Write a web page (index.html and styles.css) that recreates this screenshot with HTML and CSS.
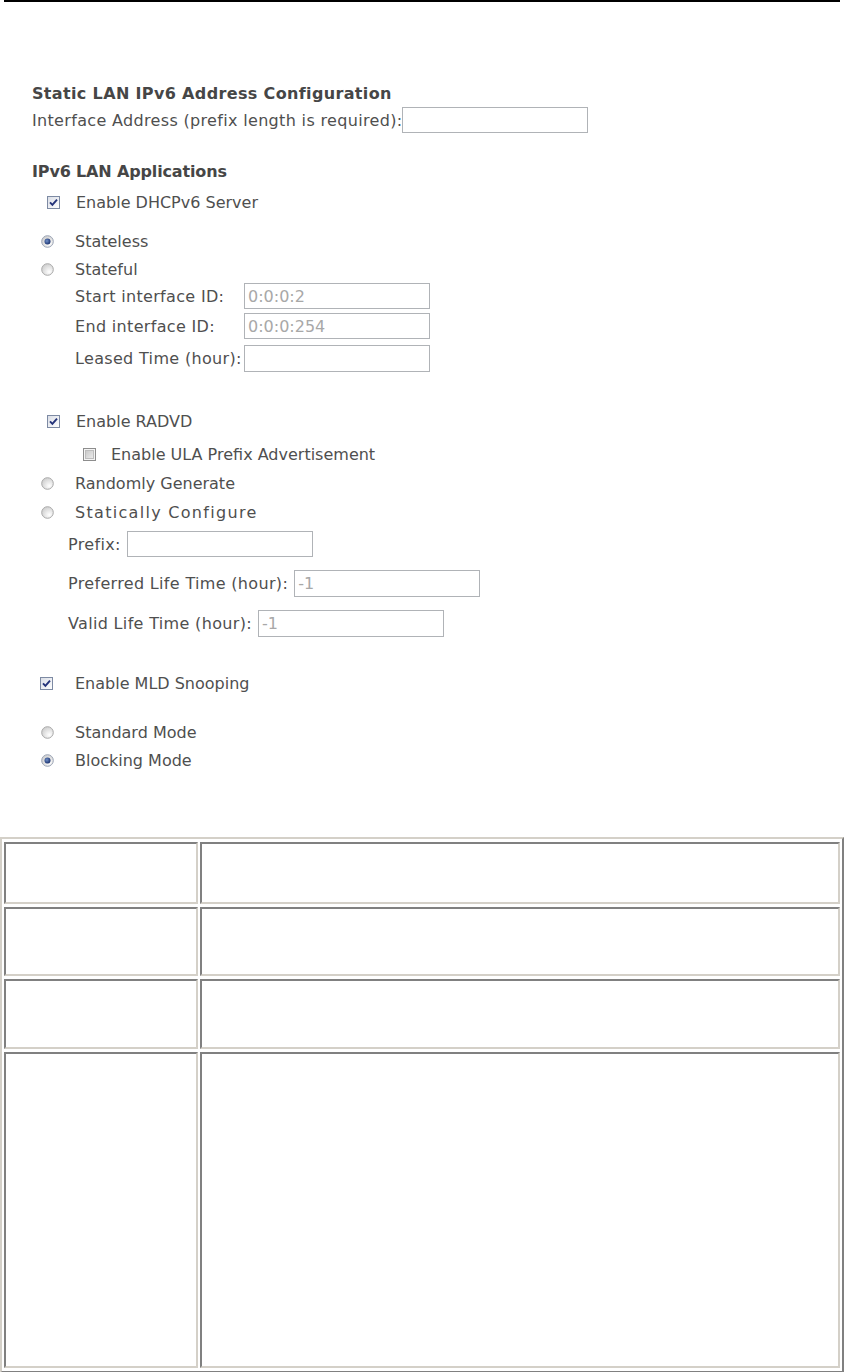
FILE: index.html
```html
<!DOCTYPE html>
<html>
<head>
<meta charset="utf-8">
<link rel="stylesheet" href="styles.css">
</head>
<body>
<svg class="defs" width="0" height="0">
  <defs>
    <linearGradient id="cbfill" x1="0" y1="0" x2="1" y2="1">
      <stop offset="0" stop-color="#d9dde6"/>
      <stop offset="1" stop-color="#ffffff"/>
    </linearGradient>
    <linearGradient id="cboff" x1="0" y1="0" x2="1" y2="1">
      <stop offset="0" stop-color="#c8c8c8"/>
      <stop offset="1" stop-color="#ececec"/>
    </linearGradient>
    <radialGradient id="rdfill" cx="0.65" cy="0.7" r="0.7">
      <stop offset="0" stop-color="#ffffff"/>
      <stop offset="1" stop-color="#d0d0d0"/>
    </radialGradient>
    <radialGradient id="rddot" cx="0.4" cy="0.4" r="0.6">
      <stop offset="0" stop-color="#6f8fc8"/>
      <stop offset="1" stop-color="#1d3470"/>
    </radialGradient>
    <symbol id="cb-on" viewBox="0 0 13 13">
      <rect x="0.5" y="0.5" width="12" height="12" fill="url(#cbfill)" stroke="#7d8aa3"/>
      <path d="M3 6.3 L5.4 8.8 L10 3.6" fill="none" stroke="#24337a" stroke-width="1.9"/>
    </symbol>
    <symbol id="cb-off" viewBox="0 0 13 13">
      <rect x="0.5" y="0.5" width="12" height="12" fill="#f4f4f4" stroke="#8d8d8d"/>
      <rect x="2.5" y="2.5" width="8" height="8" fill="url(#cboff)" stroke="#bdbdbd"/>
    </symbol>
    <symbol id="rd-off" viewBox="0 0 13 13">
      <circle cx="6.5" cy="6.5" r="5.8" fill="url(#rdfill)" stroke="#a9a9a9"/>
    </symbol>
    <symbol id="rd-on" viewBox="0 0 13 13">
      <circle cx="6.5" cy="6.5" r="5.8" fill="url(#rdfill)" stroke="#9aa3b4"/>
      <circle cx="6.5" cy="6.5" r="3" fill="url(#rddot)"/>
    </symbol>
  </defs>
</svg>

<div class="topline"></div>

<div class="form">
  <div class="row r-a head h-wide">Static LAN IPv6 Address Configuration</div>
  <div class="row r-b inrow">
    <span class="lbl">Interface Address (prefix length is required):</span><span class="box w-if"></span>
  </div>

  <div class="row r-c head h-narrow">IPv6 LAN Applications</div>
  <div class="row r-d chk ind-cb">
    <svg class="ico"><use href="#cb-on"/></svg><span class="opt">Enable DHCPv6 Server</span>
  </div>

  <div class="row r-e chk ind-rd">
    <svg class="ico"><use href="#rd-on"/></svg><span class="opt">Stateless</span>
  </div>
  <div class="row r-f chk ind-rd">
    <svg class="ico"><use href="#rd-off"/></svg><span class="opt">Stateful</span>
  </div>
  <div class="row r-g inrow sub1">
    <span class="lbl fixed">Start interface ID:</span><span class="box w-id dis">0:0:0:2</span>
  </div>
  <div class="row r-h inrow sub1">
    <span class="lbl fixed">End interface ID:</span><span class="box w-id dis">0:0:0:254</span>
  </div>
  <div class="row r-i inrow sub1">
    <span class="lbl">Leased Time (hour):</span><span class="box w-id tight"></span>
  </div>

  <div class="row r-j chk ind-cb">
    <svg class="ico"><use href="#cb-on"/></svg><span class="opt">Enable RADVD</span>
  </div>
  <div class="row r-k chk ind-cb2">
    <svg class="ico"><use href="#cb-off"/></svg><span class="opt">Enable ULA Prefix Advertisement</span>
  </div>
  <div class="row r-l chk ind-rd">
    <svg class="ico"><use href="#rd-off"/></svg><span class="opt">Randomly Generate</span>
  </div>
  <div class="row r-m chk ind-rd">
    <svg class="ico"><use href="#rd-off"/></svg><span class="opt opt-wide">Statically Configure</span>
  </div>
  <div class="row r-n inrow sub2">
    <span class="lbl">Prefix:</span><span class="box w-id gap"></span>
  </div>
  <div class="row r-o inrow sub2">
    <span class="lbl">Preferred Life Time (hour):</span><span class="box w-id gap dis">-1</span>
  </div>
  <div class="row r-p inrow sub2">
    <span class="lbl">Valid Life Time (hour):</span><span class="box w-id gap dis">-1</span>
  </div>

  <div class="row r-q chk ind-mld">
    <svg class="ico"><use href="#cb-on"/></svg><span class="opt">Enable MLD Snooping</span>
  </div>
  <div class="row r-r chk ind-rd">
    <svg class="ico"><use href="#rd-off"/></svg><span class="opt">Standard Mode</span>
  </div>
  <div class="row r-s chk ind-rd">
    <svg class="ico"><use href="#rd-on"/></svg><span class="opt">Blocking Mode</span>
  </div>
</div>

<table class="grid">
  <tr class="tr1"><td class="c1"></td><td class="c2"></td></tr>
  <tr class="tr2"><td class="c1"></td><td class="c2"></td></tr>
  <tr class="tr3"><td class="c1"></td><td class="c2"></td></tr>
  <tr class="tr4"><td class="c1"></td><td class="c2"></td></tr>
</table>
</body>
</html>
```

FILE: styles.css
```css
html, body {
  margin: 0;
  padding: 0;
  background: #ffffff;
}

.defs {
  position: absolute;
  width: 0;
  height: 0;
}

.topline {
  height: 2px;
  margin: 0 4px;
  background: #000000;
}

.form {
  padding: 79px 0 0 32px;
  font-family: "DejaVu Sans", Verdana, sans-serif;
  font-size: 16px;
  color: #4f4f4f;
}

.row {
  display: flex;
  align-items: center;
  height: 24px;
  white-space: nowrap;
}

.head {
  font-weight: bold;
  font-size: 16px;
  color: #464646;
}

.h-wide { letter-spacing: 0.35px; }
.h-narrow { letter-spacing: -0.15px; }

.lbl {
  letter-spacing: 0.33px;
}

.opt-wide {
  letter-spacing: 1.3px;
}

.inrow {
  height: 26px;
}

.box {
  box-sizing: border-box;
  display: flex;
  align-items: center;
  height: 26px;
  border: 1px solid #b0b3b7;
  background: #ffffff;
  padding-left: 3px;
  color: #a8a8a8;
}

.w-if { width: 186px; }
.w-id { width: 186px; }
.gap { margin-left: 6px; }
.tight { margin-left: 2px; }

.sub1 { padding-left: 43px; }
.sub2 { padding-left: 36px; }

.fixed { width: 169px; }

.ico {
  width: 13px;
  height: 13px;
  flex: none;
}

.ind-cb { padding-left: 15px; }
.ind-cb .ico { margin-right: 16px; }
.ind-cb2 { padding-left: 51px; }
.ind-cb2 .ico { margin-right: 15px; }
.ind-rd { padding-left: 9px; }
.ind-rd .ico { margin-right: 21px; }
.ind-mld { padding-left: 8px; }
.ind-mld .ico { margin-right: 22px; }

.r-b { margin-top: 2px; }
.r-c { margin-top: 26px; }
.r-d { margin-top: 7px; }
.r-e { margin-top: 15px; }
.r-f { margin-top: 4px; }
.r-g { margin-top: 2px; }
.r-h { margin-top: 4px; }
.r-i { margin-top: 6px; height: 27px; }
.r-i .box { height: 27px; }
.r-j { margin-top: 37px; }
.r-k { margin-top: 9px; }
.r-l { margin-top: 5px; }
.r-m { margin-top: 5px; }
.r-n { margin-top: 7px; }
.r-o { margin-top: 13px; height: 27px; }
.r-o .box { height: 27px; }
.r-p { margin-top: 13px; height: 27px; }
.r-p .box { height: 27px; }
.r-q { margin-top: 34px; }
.r-r { margin-top: 25px; }
.r-s { margin-top: 4px; }

.grid {
  margin-top: 65px;
  width: 844px;
  border-collapse: separate;
  border-spacing: 2px 3px;
  border-top: 2px solid #d4d0c8;
  border-left: 2px solid #d4d0c8;
  border-right: 2px solid #808080;
  border-bottom: 2px solid #808080;
}

.grid td {
  padding: 0;
  border-top: 2px solid #808080;
  border-left: 2px solid #808080;
  border-right: 2px solid #d4d0c8;
  border-bottom: 2px solid #d4d0c8;
}

.c1 { width: 190px; }

.tr1 { height: 62px; }
.tr2 { height: 69px; }
.tr3 { height: 70px; }
.tr4 { height: 316px; }
```
